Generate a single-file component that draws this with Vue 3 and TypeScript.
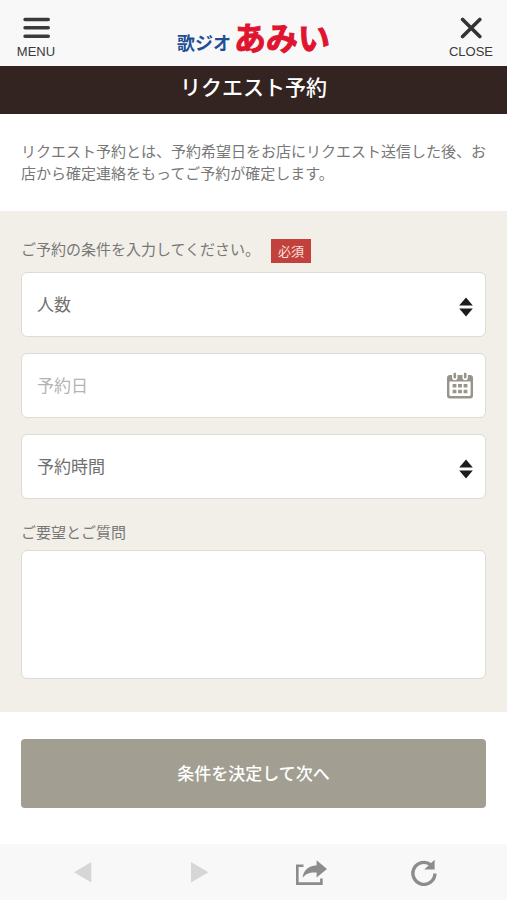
<script setup lang="ts">
import { ref } from 'vue'

const people = ref('')
const date = ref('')
const time = ref('')
const note = ref('')

const peopleOptions: number[] = [1, 2, 3, 4, 5, 6, 7, 8]
const timeOptions: string[] = ['17:00', '18:00', '19:00', '20:00', '21:00']
</script>

<template>
  <div class="page">
    <header class="topbar">
      <button type="button" class="bar-button">
        <svg width="28" height="22" viewBox="0 0 28 22" aria-hidden="true">
          <path d="M3 2.5H26.3M3 10.8H26.3M3 19.2H26.3" stroke="#3a3a3a" stroke-width="3.4" stroke-linecap="round" />
        </svg>
        <span>MENU</span>
      </button>
      <a href="#" class="logo"><span class="logo-small">歌ジオ</span><span class="logo-large">あみい</span></a>
      <button type="button" class="bar-button">
        <svg width="28" height="22" viewBox="0 0 28 22" aria-hidden="true">
          <path d="M5.6 2.4L22.8 19.6M22.8 2.4L5.6 19.6" stroke="#333" stroke-width="3.6" stroke-linecap="round" />
        </svg>
        <span>CLOSE</span>
      </button>
    </header>

    <h1 class="title">リクエスト予約</h1>

    <p class="intro">リクエスト予約とは、予約希望日をお店にリクエスト送信した後、お店から確定連絡をもってご予約が確定します。</p>

    <form class="form" @submit.prevent>
      <div class="conditions">
        <div class="legend">
          <span id="conditions-label" class="legend-text">ご予約の条件を入力してください。</span>
          <span class="badge">必須</span>
        </div>

        <div class="fields" role="group" aria-labelledby="conditions-label">
          <div class="field">
            <select v-model="people" class="control" aria-label="人数">
              <option value="">人数</option>
              <option v-for="n in peopleOptions" :key="n" :value="String(n)">{{ n }}名</option>
            </select>
            <svg class="mark arrows" width="14" height="20" viewBox="0 0 14 20" aria-hidden="true">
              <path d="M7 .4L13.8 8.6H.2ZM.2 11.4H13.8L7 19.6Z" fill="#1c1c1c" />
            </svg>
          </div>

          <div class="field">
            <input v-model="date" class="control" type="text" placeholder="予約日" aria-label="予約日" />
            <svg class="mark" width="26" height="27" viewBox="0 0 26 27" aria-hidden="true">
              <path fill-rule="evenodd" fill="#98948a" d="M3 2.5H23Q26 2.5 26 5.5V23Q26 26 23 26H3Q0 26 0 23V5.5Q0 2.5 3 2.5ZM2.4 9V22.2Q2.4 23.6 3.8 23.6H22.2Q23.6 23.6 23.6 22.2V9Z" />
              <path d="M7.8 1.8V5M18.2 1.8V5" stroke="#fff" stroke-width="5.4" stroke-linecap="round" />
              <path d="M7.8 1.4V4.8M18.2 1.4V4.8" stroke="#98948a" stroke-width="2.6" stroke-linecap="round" />
              <path fill="#98948a" d="M5.6 11.4h3.8v3.6H5.6zM11.1 11.4h3.8v3.6h-3.8zM16.6 11.4h3.8v3.6h-3.8zM5.6 17.2h3.8v3.6H5.6zM11.1 17.2h3.8v3.6h-3.8zM16.6 17.2h3.8v3.6h-3.8z" />
            </svg>
          </div>

          <div class="field">
            <select v-model="time" class="control" aria-label="予約時間">
              <option value="">予約時間</option>
              <option v-for="t in timeOptions" :key="t" :value="t">{{ t }}</option>
            </select>
            <svg class="mark arrows" width="14" height="20" viewBox="0 0 14 20" aria-hidden="true">
              <path d="M7 .4L13.8 8.6H.2ZM.2 11.4H13.8L7 19.6Z" fill="#1c1c1c" />
            </svg>
          </div>
        </div>

        <label class="note-label" for="note">ご要望とご質問</label>
        <textarea id="note" v-model="note" class="note"></textarea>
      </div>

      <div class="submit-area">
        <button type="submit" class="submit">条件を決定して次へ</button>
      </div>
    </form>

    <nav class="toolbar">
      <button type="button" class="tool" aria-label="戻る" disabled>
        <svg width="34" height="28" viewBox="0 0 34 28" aria-hidden="true"><path d="M8 14.3L25.3 4V24.6Z" fill="#d6d6d6" /></svg>
      </button>
      <button type="button" class="tool" aria-label="進む" disabled>
        <svg width="34" height="28" viewBox="0 0 34 28" aria-hidden="true"><path d="M28.4 14.3L11 4V24.6Z" fill="#d6d6d6" /></svg>
      </button>
      <button type="button" class="tool" aria-label="共有">
        <svg width="34" height="28" viewBox="0 0 34 28" aria-hidden="true">
          <path d="M10.5 7.8H4.3V25.6H28.4V20.4" fill="none" stroke="#8c8c8c" stroke-width="2.6" />
          <path d="M23.6 2.2L34 11L23.6 19.6V14.6C17.6 14.2 13.4 15.2 9.6 19.8C10.4 12.4 15.2 7.8 23.6 7.2Z" fill="#8c8c8c" />
        </svg>
      </button>
      <button type="button" class="tool" aria-label="再読み込み">
        <svg width="34" height="28" viewBox="0 0 34 28" aria-hidden="true">
          <path d="M27.9 15.4A11 11 0 1 1 23.8 6.8" fill="none" stroke="#8c8c8c" stroke-width="3.4" />
          <path d="M27.6 1.8V11.6H17.2Z" fill="#8c8c8c" />
        </svg>
      </button>
    </nav>
  </div>
</template>

<style>
body {
  margin: 0;
  background: #fff;
}
</style>

<style scoped>
.page {
  display: flex;
  flex-direction: column;
  min-height: 100vh;
  color: #777;
  font-family: "Noto Sans CJK JP", "Noto Sans", sans-serif;
  font-size: 15px;
  line-height: 22px;
}

.page * {
  box-sizing: border-box;
}

button {
  border: 0;
  padding: 0;
  background: none;
  font-family: inherit;
}

.topbar {
  display: flex;
  justify-content: space-between;
  height: 66px;
  padding: 0 12px;
  background: #f8f8f8;
}

.bar-button {
  display: flex;
  flex-direction: column;
  align-items: center;
  gap: 5px;
  width: 48px;
  padding-top: 17px;
  color: #3a3a3a;
  font-family: "Liberation Sans", Arial, sans-serif;
  font-size: 13px;
  line-height: 16px;
}

.logo {
  display: flex;
  align-items: center;
  gap: 3px;
  padding-top: 6px;
  font-weight: 700;
  text-decoration: none;
  white-space: nowrap;
}

.logo-small {
  padding-top: 12px;
  color: #1d4f94;
  font-size: 18px;
}

.logo-large {
  color: #e0142f;
  font-size: 32px;
  line-height: 48px;
  -webkit-text-stroke: 1px #e0142f;
}

.title {
  margin: 0;
  padding: 4px 0 12px;
  background: #332422;
  color: #fff;
  font-size: 21px;
  font-weight: 500;
  line-height: 32px;
  text-align: center;
}

.intro {
  margin: 0;
  padding: 26px 21px 27px;
  word-break: break-all;
  line-break: anywhere;
}

.conditions {
  display: flex;
  flex-direction: column;
  padding: 28px 21px 33px;
  background: #f2efe9;
}

.legend {
  display: flex;
  align-items: flex-start;
  gap: 11px;
  margin-bottom: 9px;
  line-height: 24px;
}

.legend-text {
  line-height: 20px;
}

.badge {
  padding: 0 7px;
  background: #c2413c;
  color: #fbe3df;
  font-size: 13px;
}

.fields {
  display: grid;
  gap: 16px;
}

.field {
  position: relative;
}

.control,
.note {
  display: block;
  width: 100%;
  margin: 0;
  border: 1px solid #dddbd7;
  border-radius: 6px;
  background: #fff;
  color: #707070;
  font-family: inherit;
  font-size: 17px;
  outline: 0;
}

.control {
  height: 65px;
  padding: 0 48px 2px 15px;
  appearance: none;
}

.control::placeholder {
  color: #b4b4b4;
  opacity: 1;
}

.mark {
  position: absolute;
  top: 50%;
  right: 13px;
  transform: translateY(-50%);
  pointer-events: none;
}

.arrows {
  margin-top: 2px;
}

.note-label {
  margin: 22px 0 7px;
}

.note {
  height: 129px;
  padding: 15px;
  resize: none;
}

.submit-area {
  padding: 27px 21px 36px;
}

.submit {
  display: block;
  width: 100%;
  height: 69px;
  padding-bottom: 2px;
  border-radius: 4px;
  background: #a29e92;
  color: #fff;
  font-size: 17px;
  font-weight: 500;
}

.toolbar {
  display: grid;
  grid-template-columns: repeat(4, 1fr);
  height: 56px;
  margin-top: auto;
  padding: 0 26px;
  background: #f8f8f8;
}

.tool {
  display: flex;
  align-items: center;
  justify-content: center;
}
</style>
